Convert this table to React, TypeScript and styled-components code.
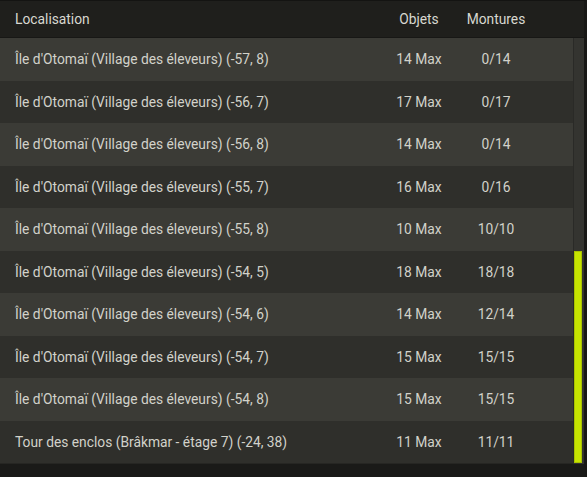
import React from "react";
import { createGlobalStyle, styled } from "styled-components";

const rows = [
  { place: "Île d'Otomaï (Village des éleveurs) (-57, 8)", objects: 14, mounts: "0/14" },
  { place: "Île d'Otomaï (Village des éleveurs) (-56, 7)", objects: 17, mounts: "0/17" },
  { place: "Île d'Otomaï (Village des éleveurs) (-56, 8)", objects: 14, mounts: "0/14" },
  { place: "Île d'Otomaï (Village des éleveurs) (-55, 7)", objects: 16, mounts: "0/16" },
  { place: "Île d'Otomaï (Village des éleveurs) (-55, 8)", objects: 10, mounts: "10/10" },
  { place: "Île d'Otomaï (Village des éleveurs) (-54, 5)", objects: 18, mounts: "18/18" },
  { place: "Île d'Otomaï (Village des éleveurs) (-54, 6)", objects: 14, mounts: "12/14" },
  { place: "Île d'Otomaï (Village des éleveurs) (-54, 7)", objects: 15, mounts: "15/15" },
  { place: "Île d'Otomaï (Village des éleveurs) (-54, 8)", objects: 15, mounts: "15/15" },
  { place: "Tour des enclos (Brâkmar - étage 7) (-24, 38)", objects: 11, mounts: "11/11" },
];

const GlobalStyle = createGlobalStyle`
  html, body {
    margin: 0;
    background: #121210;
  }
  body {
    font-family: Roboto, "Liberation Sans", sans-serif;
  }
`;

const Panel = styled.div`
  width: 587px;
  height: 477px;
  box-sizing: border-box;
  background: #262623;
  border-top: 1px solid #141412;
  border-right: 3px solid #181816;
  border-bottom: 13px solid #1a1a18;
  display: flex;
  flex-direction: column;
`;

const Header = styled.div`
  height: 36px;
  flex-shrink: 0;
  background: #1f1f1c;
  display: grid;
  grid-template-columns: 1fr 74px 80px 48px;
  align-items: center;
  color: #d8d8d0;
  font-size: 13.8px;
  border-bottom: 1px solid #171715;
`;

const Body = styled.div`
  flex: 1;
  display: flex;
  min-height: 0;
`;

const List = styled.div`
  flex: 1;
  display: flex;
  flex-direction: column;
`;

const Row = styled.div<{ $odd: boolean }>`
  height: 42.5px;
  display: grid;
  grid-template-columns: 1fr 74px 80px 37px;
  align-items: center;
  background: ${(p) => (p.$odd ? "#3b3b36" : "#2f2f2b")};
  color: #d2d2ca;
  font-size: 13.8px;
`;

const Place = styled.span`
  padding-left: 15px;
  white-space: nowrap;
`;

const Cell = styled.span`
  text-align: center;
`;

const Track = styled.div`
  width: 10px;
  background: #343430;
  border-left: 1px solid #2a2a27;
  display: flex;
  flex-direction: column;
  justify-content: flex-end;
  padding-bottom: 1px;
`;

const Thumb = styled.div`
  height: 212px;
  box-sizing: border-box;
  margin-right: 2px;
  background: #c6e400;
  border: 1px solid #a9c200;
`;

const App: React.FC = () => {
  return (
    <>
      <GlobalStyle />
      <Panel>
        <Header>
          <Place>Localisation</Place>
          <Cell>Objets</Cell>
          <Cell>Montures</Cell>
          <span />
        </Header>
        <Body>
          <List>
            {rows.map((r, i) => (
              <Row key={i} $odd={i % 2 === 0}>
                <Place>{r.place}</Place>
                <Cell>{r.objects} Max</Cell>
                <Cell>{r.mounts}</Cell>
                <span />
              </Row>
            ))}
          </List>
          <Track>
            <Thumb />
          </Track>
        </Body>
      </Panel>
    </>
  );
};

export default App;
